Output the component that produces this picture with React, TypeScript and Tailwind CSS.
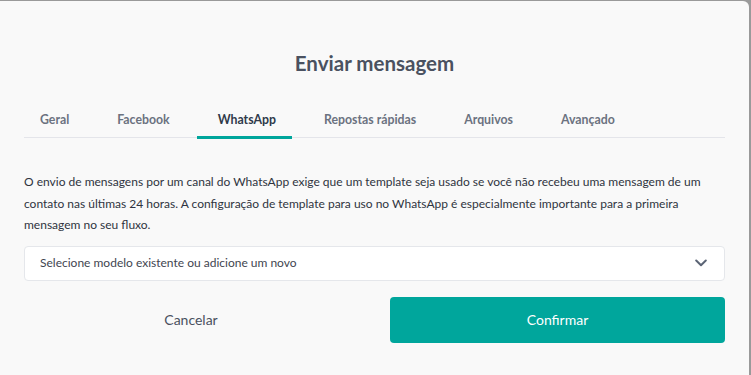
import React from "react";

const tabs = ["Geral", "Facebook", "WhatsApp", "Repostas rápidas", "Arquivos", "Avançado"];

export default function App() {
  return (
    <div className="w-[751px] h-[375px] bg-[#9a9a9a] overflow-hidden" style={{ fontFamily: "Lato, 'Noto Sans', sans-serif" }}>
      <div className="mt-px w-[749px] h-[374px] bg-[#f9f9f9] rounded-tr-[6px] flex flex-col">
        <h1 className="mt-[48px] text-center text-[20.5px] leading-[28px] font-bold text-[#4a5160]">Enviar mensagem</h1>
        <div className="mt-[28px] mx-[24px] border-b border-[#e4e5ea] flex gap-12 pl-4 h-[33px]">
          {tabs.map((t) => {
            const active = t === "WhatsApp";
            return (
              <div key={t} className="relative pt-[1px]">
                <span className={active ? "text-[12.3px] leading-[20px] font-bold text-[#2f3a4a]" : "text-[12.3px] leading-[20px] font-bold text-[#6b7280]"}>{t}</span>
                {active && <div className="absolute left-[-21px] right-[-16px] bottom-[-2px] h-[3px] bg-[#00a69c]" />}
              </div>
            );
          })}
        </div>
        <p className="mt-[33px] mx-[24px] text-[12px] leading-[21.5px] text-[#2f3440]">
          O envio de mensagens por um canal do WhatsApp exige que um template seja usado se você não recebeu uma mensagem de um contato nas últimas 24 horas. A configuração de template para uso no WhatsApp é especialmente importante para a primeira mensagem no seu fluxo.
        </p>
        <div className="mt-[10px] mx-[24px] h-[35px] bg-white border border-[#e5e7eb] rounded-[4px] flex items-center justify-between pl-[15px] pr-[17px]">
          <span className="text-[12px] text-[#3f4550]">Selecione modelo existente ou adicione um novo</span>
          <svg width="12" height="8" viewBox="0 0 12 8" fill="none">
            <path d="M1.2 1.5 L6 6.2 L10.8 1.5" stroke="#5b6475" strokeWidth="2" strokeLinecap="round" strokeLinejoin="round" />
          </svg>
        </div>
        <div className="mt-[16px] mx-[24px] flex gap-[32px]">
          <button className="flex-1 h-[46px] text-[14px] text-[#4a5160]">Cancelar</button>
          <button className="w-[335px] h-[46px] rounded-[4px] bg-[#00a69c] text-white text-[14px]">Confirmar</button>
        </div>
      </div>
    </div>
  );
}
